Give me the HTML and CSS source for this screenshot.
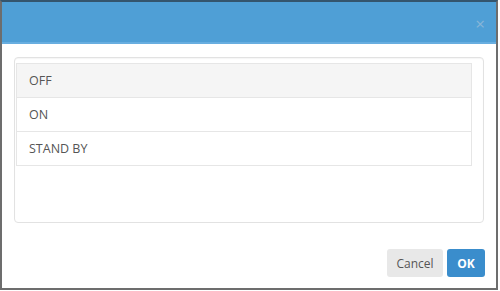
FILE: index.html
```html
<!DOCTYPE html>
<html>
<head>
<meta charset="utf-8">
<link rel="stylesheet" href="styles.css">
</head>
<body>
<div class="modal">
  <div class="modal-header">
    <span class="close">×</span>
  </div>
  <div class="modal-body">
    <div class="well">
      <ul class="list">
        <li class="item active">OFF</li>
        <li class="item">ON</li>
        <li class="item">STAND BY</li>
      </ul>
    </div>
  </div>
  <div class="modal-footer">
    <button class="btn btn-default">Cancel</button>
    <button class="btn btn-primary">OK</button>
  </div>
</div>
</body>
</html>
```
FILE: styles.css
```css
html, body {
  margin: 0;
  padding: 0;
  background: #ffffff;
}
body {
  font-family: "Open Sans", "Liberation Sans", sans-serif;
  font-size: 12px;
  color: #555555;
}
.modal {
  box-sizing: border-box;
  width: 498px;
  height: 290px;
  border: 2px solid #6d6d6d;
  border-top-color: #34556e;
  display: flex;
  flex-direction: column;
  background: #ffffff;
}
.modal-header {
  height: 40px;
  background: #4f9fd6;
  border-bottom: 2px solid #68aee0;
  display: flex;
  justify-content: flex-end;
  align-items: center;
  padding-right: 11px;
}
.close {
  color: #88b6d8;
  font-size: 17px;
  line-height: 1;
  margin-top: 3px;
}
.modal-body {
  padding: 13px 12px 0 12px;
}
.well {
  box-sizing: border-box;
  height: 166px;
  border: 1px solid #e2e2e2;
  border-radius: 4px;
  box-shadow: inset 0 1px 1px rgba(0,0,0,0.04);
  padding: 5px 11px 0 1px;
}
.list {
  list-style: none;
  margin: 0;
  padding: 0;
  border: 1px solid #e6e6e6;
  border-bottom: none;
}
.item {
  box-sizing: border-box;
  height: 34px;
  line-height: 33px;
  border-bottom: 1px solid #e6e6e6;
  padding-left: 12px;
  color: #555555;
  font-size: 12.5px;
}
.item.active {
  background: #f5f5f5;
}
.modal-footer {
  display: flex;
  justify-content: flex-end;
  gap: 4px;
  padding: 26px 11px 0 0;
}
.btn {
  height: 28px;
  border: none;
  border-radius: 3px;
  font-family: "Open Sans", "Liberation Sans", sans-serif;
  font-size: 12px;
  padding: 0;
}
.btn-default {
  width: 56px;
  background: #e8e8e8;
  color: #555555;
}
.btn-primary {
  width: 38px;
  background: #3a8dcc;
  color: #ffffff;
  font-weight: bold;
}
```
